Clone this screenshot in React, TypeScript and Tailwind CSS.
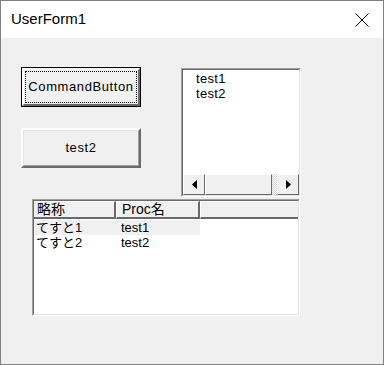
const ctl = { fontFamily: '"Liberation Sans", "Noto Sans CJK JP", sans-serif' };

function ScrollArrow({ dir }: { dir: 'left' | 'right' }) {
  return (
    <div className="w-[22px] h-full bg-[#f0f0f0] border border-t-white border-l-white border-r-[#696969] border-b-[#696969] flex items-center justify-center">
      <svg width="5" height="9" viewBox="0 0 5 9">
        {dir === 'left' ? <path d="M5 0 L0 4.5 L5 9 Z" fill="#000" /> : <path d="M0 0 L5 4.5 L0 9 Z" fill="#000" />}
      </svg>
    </div>
  );
}

function App() {
  return (
    <div className="w-[384px] h-[365px] border border-[#808080] bg-[#f0f0f0] flex flex-col" style={ctl}>
      {/* title bar */}
      <div className="h-[37px] bg-white flex items-center justify-between pl-[10px] pr-[14px] shrink-0">
        <span className="text-[15px] text-black" style={{ fontFamily: '"Liberation Sans", "Open Sans", sans-serif' }}>UserForm1</span>
        <svg width="14" height="14" viewBox="0 0 14 14">
          <path d="M0.5 0.5 L13.5 13.5 M13.5 0.5 L0.5 13.5" stroke="#000" strokeWidth="1" />
        </svg>
      </div>

      <div className="flex items-start">
        <div className="ml-[20px] mt-[29px] flex flex-col gap-[21px]">
          {/* CommandButton (focused) */}
          <div className="w-[120px] h-[40px] border border-black">
            <div className="w-full h-full border-2 border-t-white border-l-white border-r-[#696969] border-b-[#696969] bg-[#f0f0f0] p-[1px]">
              <div className="w-full h-full border border-dotted border-black flex items-center justify-center text-[13px] tracking-[0.6px] text-black">
                CommandButton
              </div>
            </div>
          </div>
          {/* test2 */}
          <div className="w-[120px] h-[40px] border-2 border-t-white border-l-white border-r-[#696969] border-b-[#696969] bg-[#f0f0f0]">
            <div className="w-full h-full border border-t-[#e3e3e3] border-l-[#e3e3e3] border-r-[#a0a0a0] border-b-[#a0a0a0] flex items-center justify-center text-[13px] tracking-[0.6px] text-black">
              test2
            </div>
          </div>
        </div>

        {/* listbox */}
        <div className="ml-[40px] mt-[30px] w-[120px] h-[129px] border border-t-[#a0a0a0] border-l-[#a0a0a0] border-r-white border-b-white">
          <div className="w-full h-full border border-t-[#696969] border-l-[#696969] border-r-[#e3e3e3] border-b-[#e3e3e3] bg-white flex flex-col">
            <div className="flex-1 pl-[13px] pt-[1px] text-[13px] leading-[15px] tracking-[0.3px] text-black">
              <div>test1</div>
              <div>test2</div>
            </div>
            <div className="h-[21px] flex bg-[#f0f0f0]">
              <ScrollArrow dir="left" />
              <div className="w-[67px] h-full bg-[#f0f0f0] border border-t-white border-l-white border-r-[#696969] border-b-[#696969]" />
              <div className="flex-1 h-full bg-[repeating-conic-gradient(#ffffff_0_25%,#d4d4d4_0_50%)] bg-[length:2px_2px]" />
              <ScrollArrow dir="right" />
            </div>
          </div>
        </div>
      </div>

      {/* listview */}
      <div className="ml-[31px] mt-[2px] w-[268px] h-[117px] border border-t-[#a0a0a0] border-l-[#a0a0a0] border-r-white border-b-white">
        <div className="w-full h-full border border-t-[#696969] border-l-[#696969] border-r-[#e3e3e3] border-b-[#e3e3e3] bg-white flex flex-col">
          <div className="h-[18px] flex bg-[#f0f0f0] text-[14px] text-black shrink-0">
            <div className="w-[82px] border-t border-t-white border-r-2 border-r-[#696969] border-b-2 border-b-[#696969] pl-[3px] leading-[15px]">略称</div>
            <div className="w-[84px] border-t border-t-white border-l border-l-white border-r-2 border-r-[#696969] border-b-2 border-b-[#696969] pl-[5px] leading-[15px]">Proc名</div>
            <div className="flex-1 border-t border-t-white border-l border-l-white border-b-2 border-b-[#696969]" />
          </div>
          <div className="pt-[1px] text-[13px] leading-[15px] text-black">
            <div className="flex w-[166px] bg-[#f0f0f0]">
              <div className="w-[87px] pl-[2px]">てすと1</div>
              <div>test1</div>
            </div>
            <div className="flex w-[166px]">
              <div className="w-[87px] pl-[2px]">てすと2</div>
              <div>test2</div>
            </div>
          </div>
        </div>
      </div>
    </div>
  );
}

export default App;
